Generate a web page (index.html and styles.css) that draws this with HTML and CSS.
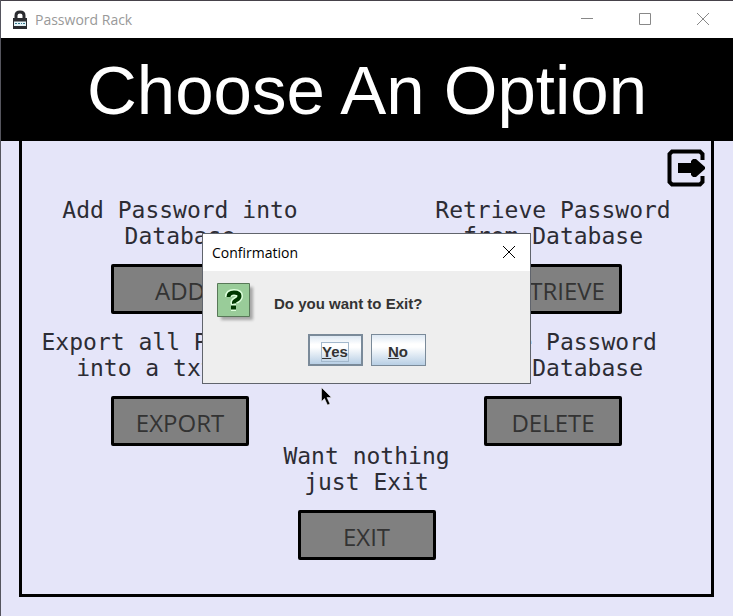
FILE: index.html
```html
<!DOCTYPE html>
<html lang="en">
<head>
<meta charset="utf-8">
<title>Password Rack</title>
<link rel="stylesheet" href="styles.css">
</head>
<body>
<div class="window">
  <header class="titlebar">
    <svg class="lock" viewBox="0 0 16 20" aria-hidden="true">
      <path d="M4 9V5.500Q4 2 8 2T12 5.500V9" fill="none" stroke="#2b2c30" stroke-width="3"/>
      <path d="M1 8h14v11H1z" fill="#2b2c30"/>
      <path d="M2 11.500h12v4.500H2z" fill="#e6f4f8"/>
      <path d="M3 13.500h2m1 0h2m1 0h1m1 0h2" stroke="#35788c" stroke-width="1"/>
    </svg>
    <span class="app-name">Password Rack</span>
    <div class="window-controls">
      <button class="control" type="button" aria-label="Minimize"><svg viewBox="0 0 14 14"><path d="M1 5.500h12"/></svg></button>
      <button class="control" type="button" aria-label="Maximize"><svg viewBox="0 0 14 14"><path d="M1.500.500h11v11h-11z"/></svg></button>
      <button class="control" type="button" aria-label="Close"><svg viewBox="0 0 14 14"><path d="M1 0l12 12M13 0L1 12"/></svg></button>
    </div>
  </header>
  <h1 class="heading">Choose An Option</h1>
  <main class="panel">
    <div class="toolbar">
      <button class="leave" type="button" aria-label="Exit">
        <svg viewBox="0 0 38 38">
          <path d="M35.500 11V5L33 2.500H5L2.500 5v28L5 35.500h28l2.500-2.500v-6" fill="none" stroke="#000" stroke-width="4"/>
          <path d="M11 14h13v-2l2-2h3l9 8v2l-9 8h-3l-2-2v-2H11z" fill="#000"/>
        </svg>
      </button>
    </div>
    <div class="options">
      <section class="option">
        <p class="caption">Add Password into<br>Database</p>
        <button class="action" type="button">ADD</button>
      </section>
      <section class="option">
        <p class="caption">Retrieve Password<br>from Database</p>
        <button class="action" type="button">RETRIEVE</button>
      </section>
      <section class="option">
        <p class="caption">Export all Passwords<br>into a txt file</p>
        <button class="action" type="button">EXPORT</button>
      </section>
      <section class="option">
        <p class="caption">Delete Password<br>from Database</p>
        <button class="action" type="button">DELETE</button>
      </section>
      <section class="option option-last">
        <p class="caption">Want nothing<br>just Exit</p>
        <button class="action" type="button">EXIT</button>
      </section>
    </div>
  </main>
  <div class="dialog" role="dialog" aria-labelledby="dialog-title">
    <div class="dialog-bar">
      <span id="dialog-title">Confirmation</span>
      <button class="dialog-close" type="button" aria-label="Close"><svg viewBox="0 0 14 14"><path d="M1 0l12 12M13 0L1 12"/></svg></button>
    </div>
    <div class="dialog-body">
      <div class="message">
        <svg class="question" viewBox="0 0 40 40" aria-hidden="true">
          <defs><filter id="soft"><feGaussianBlur stdDeviation="1.500"/></filter></defs>
          <path d="M4 4h32v33H4z" fill="#777" opacity=".6" filter="url(#soft)"/>
          <path d="M.5.5h32v33H.5z" fill="#99cc99" stroke="#587858"/>
          <g fill="none" stroke-linejoin="round">
            <path d="M11.500 14q0-4.500 5.500-4.500t5.500 3.500q0 2.500-3 4t-2.500 3.500M14 24.500h5" stroke="#ddffdc" stroke-width="7"/>
            <path d="M11.500 14q0-4.500 5.500-4.500t5.500 3.500q0 2.500-3 4t-2.500 3.500M14 24.500h5" stroke="#003800" stroke-width="4"/>
          </g>
        </svg>
        <p class="prompt">Do you want to Exit?</p>
      </div>
      <div class="answers">
        <button class="answer answer-default" type="button"><span class="focus"><u>Y</u>es</span></button>
        <button class="answer" type="button"><span><u>N</u>o</span></button>
      </div>
    </div>
  </div>
  <svg class="pointer" viewBox="0 0 11 19" aria-hidden="true"><path d="M.5.500v14l3-3 3 6.500 2.500-1-3-6.500h4.500z" fill="#000" stroke="#fff" stroke-width=".5"/></svg>
</div>
</body>
</html>
```

FILE: styles.css
```css
* {
  box-sizing: border-box;
}

body {
  margin: 0;
  background: #e5e5f9;
  color: #2c2c34;
  font-family: "Open Sans", sans-serif;
}

button {
  padding: 0;
  border: 0;
  background: none;
  color: inherit;
  font: inherit;
}

p,
h1 {
  margin: 0;
}

.window {
  position: relative;
  display: flex;
  flex-direction: column;
  min-height: 100vh;
  border-left: 1px solid #55555e;
}

.titlebar {
  display: flex;
  align-items: center;
  height: 38px;
  padding: 0 1px 0 11px;
  border-top: 1px solid #46424a;
  background: #fff;
}

.lock {
  width: 16px;
  height: 20px;
}

.app-name {
  margin-left: 7px;
  color: #999;
  font-size: 14px;
}

.window-controls {
  display: flex;
  margin-left: auto;
}

.control {
  display: grid;
  place-items: center;
  width: 58px;
  height: 36px;
}

.control svg,
.dialog-close svg {
  width: 14px;
  height: 14px;
  fill: none;
  stroke: #888;
}

.heading {
  height: 103px;
  background: #000;
  color: #fff;
  font: 69px/106px "Liberation Sans", sans-serif;
  text-align: center;
}

.panel {
  flex: 1;
  margin: 0 19px 19px 18px;
  padding-bottom: 34px;
  border: solid #000;
  border-width: 0 3px 3px;
}

.toolbar {
  display: flex;
  justify-content: flex-end;
  padding: 8px 6px 10px;
}

.leave,
.leave svg {
  display: block;
  width: 38px;
  height: 38px;
}

.options {
  display: grid;
  grid-template-columns: 280px 280px;
  justify-content: space-between;
  row-gap: 15px;
  padding: 0 18px;
}

.option {
  display: flex;
  flex-direction: column;
  align-items: center;
  gap: 15px;
}

.option-last {
  grid-column: 1 / -1;
  margin-top: -18px;
}

.caption {
  font: 23px/26px "DejaVu Sans Mono", monospace;
  text-align: center;
  white-space: nowrap;
}

.action {
  width: 138px;
  height: 50px;
  padding-top: 4px;
  border: 3px solid #000;
  border-radius: 2px;
  background: #808080;
  color: #333;
  font-size: 24px;
  line-height: 40px;
}

.dialog {
  position: absolute;
  top: 233px;
  right: 1px;
  left: 0;
  width: 329px;
  margin: 0 auto;
  border: 1px solid #60646c;
  background: #eee;
}

.dialog-bar {
  display: flex;
  align-items: center;
  justify-content: space-between;
  height: 37px;
  padding: 0 14px 0 9px;
  background: #fff;
  color: #000;
  font-size: 14px;
}

.dialog-close svg {
  display: block;
  stroke: #000;
}

.dialog-body {
  padding: 12px 14px 17px;
}

.message {
  display: flex;
  gap: 17px;
}

.question {
  width: 40px;
  height: 40px;
}

.prompt {
  color: #333;
  font: bold 15px/41px "Liberation Sans", sans-serif;
}

.answers {
  display: flex;
  justify-content: center;
  gap: 8px;
  margin-top: 10px;
}

.answer {
  width: 55px;
  height: 32px;
  border: 1px solid #7a8a99;
  background: linear-gradient(#dde8f3, #fff 30%, #fff 40%, #b8cfe5);
  color: #333;
  font: bold 15px/18px "Liberation Sans", sans-serif;
}

.answer-default {
  border-width: 2px;
}

.answer span {
  display: inline-block;
  margin-top: 3px;
}

.answer .focus {
  outline: 1px solid #a3b8cc;
}

.pointer {
  position: absolute;
  top: 387px;
  left: 320px;
  width: 11px;
  height: 19px;
}
```
